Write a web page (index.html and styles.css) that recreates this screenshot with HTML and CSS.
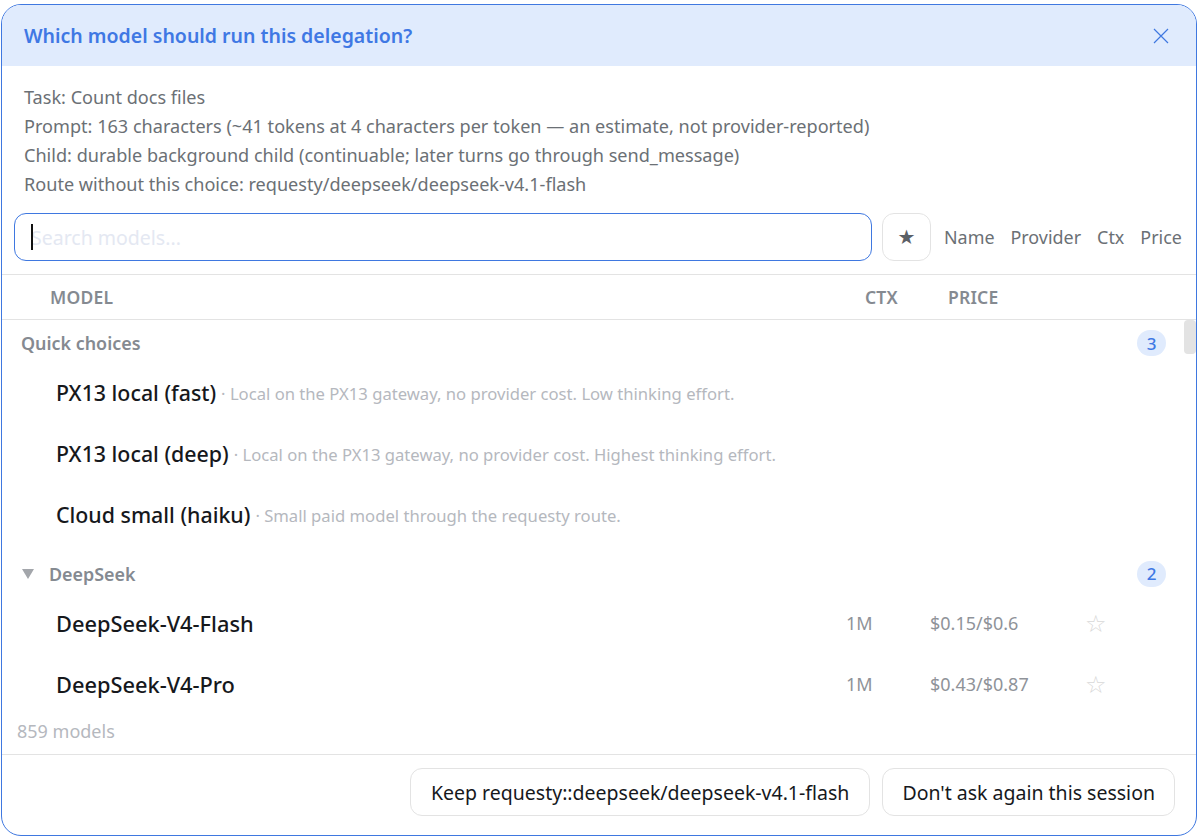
FILE: index.html
```html
<!DOCTYPE html>
<html lang="en">
<head>
<meta charset="utf-8">
<title>Model picker</title>
<link rel="stylesheet" href="styles.css">
</head>
<body>
<div class="dialog">
  <header class="head">
    <h1 class="title">Which model should run this delegation?</h1>
    <svg class="close" width="16" height="16" viewBox="0 0 16 16"><path d="M1 1L15 15M15 1L1 15" stroke="#3f78e0" stroke-width="1.2" fill="none"/></svg>
  </header>
  <div class="info">
    <div>Task: Count docs files</div>
    <div>Prompt: 163 characters (~41 tokens at 4 characters per token — an estimate, not provider-reported)</div>
    <div>Child: durable background child (continuable; later turns go through send_message)</div>
    <div>Route without this choice: requesty/deepseek/deepseek-v4.1-flash</div>
  </div>
  <div class="searchbar">
    <div class="search"><span class="caret"></span><span class="placeholder">Search models...</span></div>
    <div class="starbtn">★</div>
    <div class="sorts"><span>Name</span><span>Provider</span><span>Ctx</span><span>Price</span></div>
  </div>
  <div class="cols"><span class="c-model">MODEL</span><span class="c-ctx">CTX</span><span class="c-price">PRICE</span></div>
  <div class="list">
    <div class="thumb"></div>
    <div class="group first"><span class="gname">Quick choices</span><span class="badge">3</span></div>
    <div class="row"><span class="name">PX13 local (fast)</span><span class="desc">· Local on the PX13 gateway, no provider cost. Low thinking effort.</span></div>
    <div class="row"><span class="name">PX13 local (deep)</span><span class="desc">· Local on the PX13 gateway, no provider cost. Highest thinking effort.</span></div>
    <div class="row"><span class="name">Cloud small (haiku)</span><span class="desc">· Small paid model through the requesty route.</span></div>
    <div class="group"><span class="tri"></span><span class="gname">DeepSeek</span><span class="badge">2</span></div>
    <div class="row"><span class="name grow">DeepSeek-V4-Flash</span><span class="ctx">1M</span><span class="price">$0.15/$0.6</span><span class="fav">☆</span></div>
    <div class="row"><span class="name grow">DeepSeek-V4-Pro</span><span class="ctx">1M</span><span class="price">$0.43/$0.87</span><span class="fav">☆</span></div>
  </div>
  <div class="count">859 models</div>
  <footer class="foot">
    <button class="btn">Keep requesty::deepseek/deepseek-v4.1-flash</button>
    <button class="btn tight">Don't ask again this session</button>
  </footer>
</div>
</body>
</html>
```

FILE: styles.css
```css
* { box-sizing: border-box; }
html, body { margin: 0; height: 100%; background: #fff; }
body { padding: 4px 1px 2px; font-family: "Noto Sans", "Open Sans", sans-serif; overflow: hidden; }
.dialog { height: 832px; border: 1px solid #3f78e0; border-radius: 20px; overflow: hidden; display: flex; flex-direction: column; background: #fff; }
.head { height: 61px; flex: none; background: #e0ebfd; display: flex; align-items: center; justify-content: space-between; padding: 0 27px 0 22px; }
.title { margin: 0; font-size: 19.5px; font-weight: 600; color: #3f78e4; }
.close { display: block; }
.info { padding: 17px 22px 0; font-size: 18.1px; line-height: 29px; color: #6b7075; height: 147px; flex: none; white-space: nowrap; }
.searchbar { height: 62px; flex: none; display: flex; padding: 0 12px; border-bottom: 1px solid #e3e3e3; align-items: flex-start; }
.search { width: 858px; height: 48px; border: 1px solid #3f78e0; border-radius: 12px; display: flex; align-items: center; padding-left: 16px; font-size: 19.5px; position: relative; }
.caret { width: 2px; height: 26px; background: #111; position: absolute; left: 16px; top: 10px; }
.placeholder { color: #e4e8f2; }
.starbtn { width: 49px; height: 48px; margin-left: 10px; border: 1px solid #e3e3e3; border-radius: 12px; display: flex; align-items: center; justify-content: center; font-size: 20px; color: #5b6066; font-family: "DejaVu Sans", sans-serif; }
.sorts { display: flex; gap: 16px; margin-left: 13px; height: 48px; align-items: center; font-size: 17.92px; color: #6b7075; }
.cols { height: 45px; flex: none; display: flex; align-items: center; border-bottom: 1px solid #e3e3e3; font-size: 17.5px; font-weight: 600; color: #858a91; letter-spacing: .2px; position: relative; padding-left: 48px; }
.c-ctx { position: absolute; left: 863px; }
.c-price { position: absolute; left: 946px; }
.list { flex: 1; min-height: 0; position: relative; padding: 0 30px 0 19px; overflow: hidden; }
.thumb { position: absolute; right: 0; top: 0; width: 12px; height: 34px; background: #e3e3e3; border-radius: 4px; }
.group { height: 39px; display: flex; align-items: center; font-size: 17.9px; font-weight: 600; color: #858a91; margin-top: 9px; }
.group.first { margin-top: 0; height: 42px; padding-top: 4px; }
.tri { width: 0; height: 0; border: 6px solid transparent; border-top: 10px solid #a3a6ab; border-bottom: 0; margin: 0 15px 0 1px; }
.gname { flex: 1; }
.badge { width: 29px; height: 26px; border-radius: 13px; background: #e0ebfd; color: #3f78e4; font-size: 17px; font-weight: 500; display: flex; align-items: center; justify-content: center; }
.row { height: 61px; display: flex; align-items: center; padding: 0 14px 0 35px; white-space: nowrap; }
.name { font-size: 21.35px; font-weight: 500; color: #16181c; }
.grow { flex: 1; font-size: 21.8px; }
.desc { font-size: 16.65px; color: #b5b8be; margin-left: 5px; padding-top: 1px; }
.ctx { width: 84px; font-size: 18px; color: #8f9399; padding-bottom: 2px; }
.price { width: 155px; font-size: 18px; color: #8f9399; padding-bottom: 2px; }
.fav { width: 67px; font-size: 24px; color: #d8d8d8; font-family: "DejaVu Sans", sans-serif; }
.count { height: 38px; flex: none; font-size: 18px; color: #b5b8be; padding: 0 15px 8px; display: flex; align-items: center; }
.foot { height: 81px; flex: none; border-top: 1px solid #e3e3e3; display: flex; justify-content: flex-end; gap: 12px; padding: 13px 21px 0 0; }
.btn { height: 48px; padding: 0 20px; border: 1px solid #e3e3e3; border-radius: 12px; background: #fff; font: 400 19.5px "Noto Sans", "Open Sans", sans-serif; color: #16181c; }
.tight { padding: 0 19px; }
```
